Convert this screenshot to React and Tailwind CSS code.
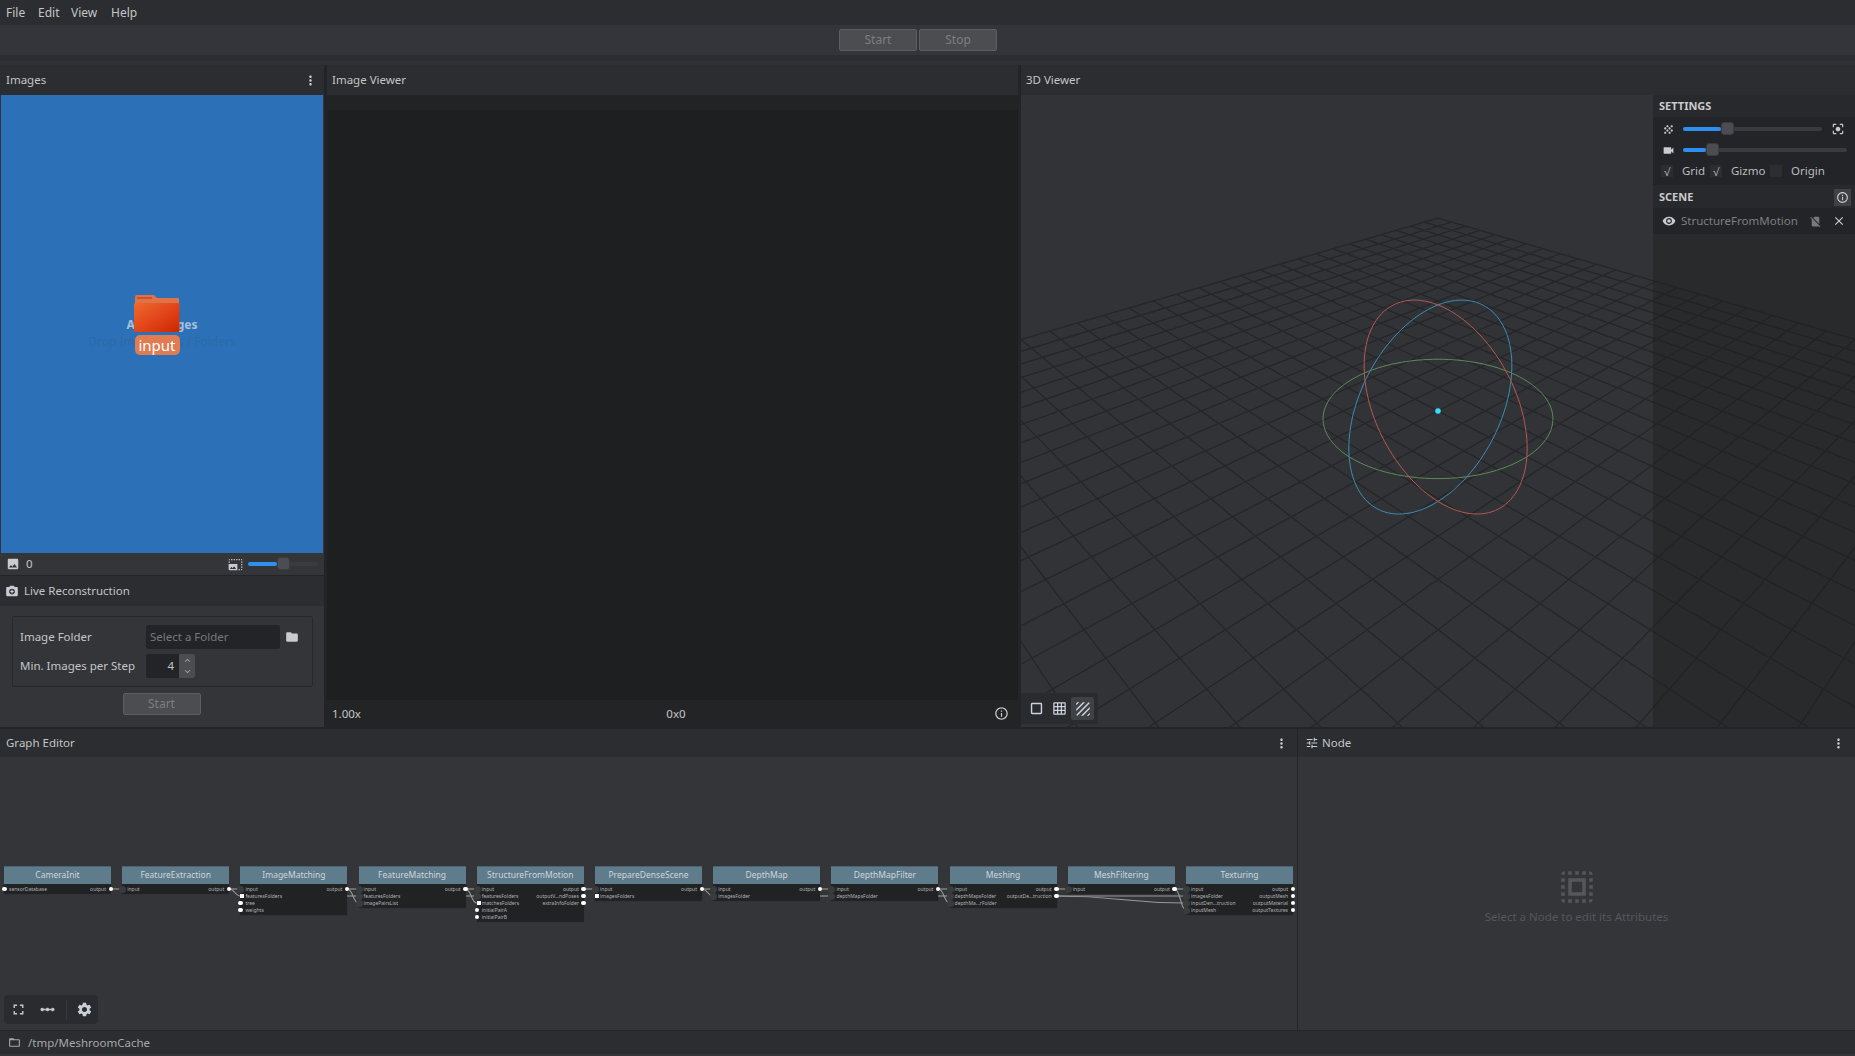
import React from 'react';
import {
  MdMoreVert, MdPhoto, MdPhotoSizeSelectLarge, MdCameraEnhance, MdFolder, MdKeyboardArrowUp, MdKeyboardArrowDown,
  MdInfoOutline, MdGrain, MdCenterFocusStrong, MdVideocam, MdVisibility, MdNoSim, MdClose, MdCropSquare, MdGridOn,
  MdTexture, MdTune, MdSelectAll, MdFullscreen, MdLinearScale, MdSettings, MdFolderOpen,
} from 'react-icons/md';

const NODE_W = 107;
const NODE_STEP = 118.2;
const ROW_H = 7;

// d: connected (dark), o: free dot, s: free square
const nodes = [
  { name: 'CameraInit', inputs: [['sensorDatabase', 'o']], outputs: ['output'] },
  { name: 'FeatureExtraction', inputs: [['input', 'd']], outputs: ['output'] },
  { name: 'ImageMatching', inputs: [['input', 'd'], ['featuresFolders', 's'], ['tree', 'o'], ['weights', 'o']], outputs: ['output'] },
  { name: 'FeatureMatching', inputs: [['input', 'd'], ['featuresFolders', 'd'], ['imagePairsList', 'd']], outputs: ['output'] },
  { name: 'StructureFromMotion', inputs: [['input', 'd'], ['featuresFolders', 'd'], ['matchesFolders', 's'], ['initialPairA', 'o'], ['initialPairB', 'o']], outputs: ['output', 'outputV...ndPoses', 'extraInfoFolder'] },
  { name: 'PrepareDenseScene', inputs: [['input', 'd'], ['imagesFolders', 's']], outputs: ['output'] },
  { name: 'DepthMap', inputs: [['input', 'd'], ['imagesFolder', 'd']], outputs: ['output'] },
  { name: 'DepthMapFilter', inputs: [['input', 'd'], ['depthMapsFolder', 'd']], outputs: ['output'] },
  { name: 'Meshing', inputs: [['input', 'd'], ['depthMapsFolder', 'd'], ['depthMa...rFolder', 'd']], outputs: ['output', 'outputDe...truction'] },
  { name: 'MeshFiltering', inputs: [['input', 'd']], outputs: ['output'] },
  { name: 'Texturing', inputs: [['input', 'd'], ['imagesFolder', 'd'], ['inputDen...truction', 'd'], ['inputMesh', 'd']], outputs: ['output', 'outputMesh', 'outputMaterial', 'outputTextures'] },
];

// [from node, from row, to node, to row]
const edges = [
  [0, 0, 1, 0], [1, 0, 2, 0], [1, 0, 2, 1], [2, 0, 3, 0], [2, 0, 3, 2], [3, 0, 4, 0], [3, 0, 4, 2],
  [4, 0, 5, 0], [5, 0, 6, 0], [5, 0, 6, 1], [6, 0, 7, 0], [7, 0, 8, 0], [7, 0, 8, 2], [8, 0, 9, 0],
  [9, 0, 10, 0], [9, 0, 10, 3], [8, 1, 10, 1], [8, 1, 10, 2],
];
// short ends of edges running behind a node
const stubs = [[3, 1], [4, 1], [7, 1], [8, 1]];

const nodeX = (i) => 4 + NODE_STEP * i;
const rowY = (r) => 23 + r * ROW_H;

function Graph() {
  return (
    <div className="relative flex-1 min-w-0 overflow-hidden">
      <svg className="absolute left-0 top-[109px]" width="1297" height="60" fill="none" stroke="#98999b" strokeWidth="1.1">
        {edges.map(([a, ra, b, rb]) => {
          const x1 = nodeX(a) + NODE_W;
          const x2 = nodeX(b);
          const y1 = rowY(ra);
          const y2 = rowY(rb);
          const mid = x1 + (x2 - x1) / 2;
          return <path key={`${a}${ra}${b}${rb}`} d={`M${x1} ${y1}C${mid} ${y1} ${mid} ${y2} ${x2} ${y2}`} />;
        })}
        {stubs.map(([n, r]) => (
          <path key={`${n}${r}`} d={`M${nodeX(n) - 12} ${rowY(r)}H${nodeX(n)}`} />
        ))}
      </svg>
      {nodes.map((n, i) => (
        <div key={n.name} className="absolute top-[109px] w-[107px]" style={{ left: nodeX(i) }}>
          <div className="h-[18px] bg-[#5f7c8c] border-t border-[#4d6572] text-center text-[8.5px] leading-[15px] text-[#ced6da]">{n.name}</div>
          <div className="relative bg-[#212224] shadow-[0_1px_1px_#00000055]" style={{ height: Math.max(n.inputs.length, n.outputs.length) * ROW_H + 2 }}>
            {n.inputs.map(([label, kind], r) => (
              <div key={label} className="absolute left-0 flex h-[7px] items-center" style={{ top: 1.5 + r * ROW_H }}>
                {kind === 'd' && <span className="absolute left-[-3px] size-[7px] rounded-full bg-[#3a3b3d]" />}
                {kind === 'o' && <span className="absolute left-[-2px] size-[4.5px] rounded-full bg-white" />}
                {kind === 's' && <span className="absolute left-0 size-[4px] bg-white" />}
                <span className="pl-[5px] text-[5px] leading-none whitespace-nowrap text-[#b0b2b4]">{label}</span>
              </div>
            ))}
            {n.outputs.map((label, r) => (
              <div key={label} className="absolute right-0 flex h-[7px] items-center" style={{ top: 1.5 + r * ROW_H }}>
                <span className="pr-[5px] text-[5px] leading-none whitespace-nowrap text-[#b0b2b4]">{label}</span>
                <span className="absolute right-[-2px] size-[4.5px] rounded-full bg-white" />
              </div>
            ))}
          </div>
        </div>
      ))}
      <div className="absolute left-[4px] bottom-[6px] flex h-[29px] w-[94px] items-center rounded-sm bg-[#2a2b2e] text-[#c2c6ca]">
        <MdFullscreen size={17} className="ml-[5.5px]" />
        <MdLinearScale size={17} className="ml-[12px]" />
        <div className="ml-[10px] h-[20px] w-px bg-[#38393c]" />
        <MdSettings size={17} className="ml-[9px] text-[#c9d0d8]" />
      </div>
    </div>
  );
}

// orbit camera looking at the grid origin, yawed 45deg
const PITCH = (31 * Math.PI) / 180;
const K = 33.5;
const CAM = 22;
const VW = 834;
const VH = 632;

function project(x, y, z) {
  const side = (x - z) * Math.SQRT1_2;
  const fwd = (x + z) * Math.SQRT1_2;
  const depth = CAM + fwd * Math.cos(PITCH) - y * Math.sin(PITCH);
  const up = fwd * Math.sin(PITCH) + y * Math.cos(PITCH);
  const s = (K * CAM) / depth;
  return [VW / 2 + side * s, VH / 2 - up * s];
}

function gridLine(a, b) {
  const p = project(a[0], 0, a[1]);
  const q = project(b[0], 0, b[1]);
  return `M${p[0].toFixed(1)} ${p[1].toFixed(1)}L${q[0].toFixed(1)} ${q[1].toFixed(1)}`;
}

function ring(fn) {
  const pts = [];
  for (let i = 0; i <= 120; i++) {
    const th = (i / 120) * Math.PI * 2;
    pts.push(fn(Math.cos(th), Math.sin(th)));
  }
  return pts.map((p, i) => `${i ? 'L' : 'M'}${p[0].toFixed(1)} ${p[1].toFixed(1)}`).join('') + 'Z';
}

function Scene() {
  const N = 14;
  const lines = [];
  for (let i = -N; i <= N; i++) {
    lines.push(gridLine([i, -N], [i, N]));
    lines.push(gridLine([-N, i], [N, i]));
  }
  const R = 3.4;
  return (
    <svg className="absolute inset-0" width={VW} height={VH} fill="none">
      <path d={lines.join('')} stroke="#252628" strokeWidth="1.3" />
      <path d={ring((c, s) => project(R * c, 0, R * s))} stroke="#5a8c58" strokeWidth="1" />
      <path d={ring((c, s) => project(R * c, R * s, 0))} stroke="#3b8db3" strokeWidth="1" />
      <path d={ring((c, s) => project(0, R * s, R * c))} stroke="#b8574f" strokeWidth="1" />
      <circle cx={VW / 2} cy={VH / 2} r="2.8" fill="#35e0ff" />
    </svg>
  );
}

function Slider({ track, fill, knob }) {
  return (
    <div className={`relative h-[4px] rounded-full bg-[#3a3b3e] ${track}`}>
      <div className={`absolute left-0 top-0 h-[4px] rounded-full bg-[#2e8ff0] ${fill}`} />
      <div className={`absolute top-[-5px] h-[13px] w-[13px] rounded-[3px] bg-[#4b4d52] border border-[#3a3b3e] ${knob}`} />
    </div>
  );
}

function Check({ on, label, className }) {
  return (
    <div className={`flex items-center ${className}`}>
      <span className="flex h-[12px] w-[12px] items-center justify-center bg-[#2c2d30] text-[11px] leading-none text-[#b0b2b5]">{on ? '√' : ''}</span>
      <span className="ml-[9px]">{label}</span>
    </div>
  );
}

function PanelHeader({ title, icon, menu, className = 'px-[5px]' }) {
  return (
    <div className={`flex h-[30px] shrink-0 items-center bg-[#2b2d30] text-[11.5px] text-[#c3c5c7] ${className}`}>
      {icon}
      <span className="flex-1">{title}</span>
      {menu && <MdMoreVert size={15} className="mr-[2px] text-[#c8ccd0]" />}
    </div>
  );
}

function GreyButton({ label, className }) {
  return (
    <div className={`flex items-center justify-center rounded-[2px] border border-[#5c5e61] bg-[#4b4d50] text-[12px] text-[#7c7e80] ${className}`}>{label}</div>
  );
}

function FolderIcon() {
  return (
    <svg width="46" height="38" viewBox="0 0 46 38">
      <defs>
        <linearGradient id="folderFront" x1="0" y1="0" x2="1" y2="1">
          <stop offset="0" stopColor="#ee6a2e" />
          <stop offset="0.5" stopColor="#e2461a" />
          <stop offset="1" stopColor="#cc2600" />
        </linearGradient>
      </defs>
      <path d="M1 2a2 2 0 0 1 2-2h17l3 3h21a1 1 0 0 1 1 1v12H1z" fill="#e07345" />
      <rect x="3" y="2" width="15" height="2" fill="#d4502a" />
      <rect x="0" y="8" width="45.5" height="29" rx="1.5" fill="url(#folderFront)" />
    </svg>
  );
}

export default function App() {
  return (
    <div className="flex h-[1056px] w-[1855px] flex-col overflow-hidden bg-[#333539] text-[11.5px] text-[#c3c5c7]" style={{ fontFamily: '"Noto Sans", "Open Sans", sans-serif' }}>
      {/* Menu */}
      <div className="flex h-[25px] shrink-0 items-center bg-[#2b2d30] pl-[6px] text-[12px] text-[#c3c5c7]">
        <span className="w-[32px]">File</span>
        <span className="w-[33px]">Edit</span>
        <span className="w-[40px]">View</span>
        <span>Help</span>
      </div>

      {/* Toolbar */}
      <div className="flex h-[30px] shrink-0 items-center justify-center gap-[2px] bg-[#33353a] pr-[19px]">
        <GreyButton label="Start" className="h-[22px] w-[78px]" />
        <GreyButton label="Stop" className="h-[22px] w-[78px]" />
      </div>
      <div className="h-[6px] shrink-0 bg-[#2b2d30]" />
      <div className="h-[4px] shrink-0 bg-[#2f3134]" />

      {/* Top row */}
      <div className="flex h-[662px] shrink-0">
        <div className="flex w-[324px] shrink-0 flex-col">
          <PanelHeader title="Images" menu className="pl-[6px] pr-[4px]" />
          <div className="relative h-[458px] shrink-0 mx-[1px] bg-[#2c71b7]">
            <div className="flex h-full flex-col items-center justify-center pt-[18px]">
              <div className="text-[12px] font-bold leading-[17px] text-[#a9c0d6]">Add Images</div>
              <div className="text-[12px] leading-[17px] text-[#2b6aa9]">Drop Image Files / Folders</div>
            </div>
            <div className="absolute left-[133px] top-[200px] flex w-[46px] flex-col items-center">
              <FolderIcon />
              <div className="mt-[2px] flex h-[20px] w-[45px] items-center justify-center rounded-[5px] bg-[#e07b52] text-[15px] text-white">input</div>
            </div>
          </div>
          <div className="flex h-[23px] shrink-0 items-center border-b border-[#232427] px-[6px]">
            <MdPhoto size={14} className="text-[#c8ccd0]" />
            <span className="ml-[6px]">0</span>
            <MdPhotoSizeSelectLarge size={15} className="ml-auto mr-[5px] text-[#c8ccd0]" />
            <Slider track="w-[70px]" fill="w-[29px]" knob="left-[29px]" />
          </div>
          <PanelHeader title="Live Reconstruction" icon={<MdCameraEnhance size={14} className="mr-[5px] text-[#c8ccd0]" />} />
          <div className="flex flex-1 flex-col pl-[12px] pr-[11px] pt-[10px]">
            <div className="h-[71px] rounded-[2px] border border-[#27282b] pl-[7px] pt-[8px]">
              <div className="flex h-[24px] items-center">
                <span className="w-[126px]">Image Folder</span>
                <div className="flex h-[24px] w-[134px] items-center rounded-[2px] bg-[#232427] pl-[4px] text-[#76787b]">Select a Folder</div>
                <MdFolder size={14} className="ml-[5px] text-[#c8ccd0]" />
              </div>
              <div className="mt-[5px] flex h-[24px] items-center">
                <span className="w-[126px] whitespace-nowrap">Min. Images per Step</span>
                <div className="flex h-[24px] w-[49px] items-center justify-between rounded-[2px] bg-[#232427]">
                  <span className="w-[28px] text-right text-[#c3c5c7]">4</span>
                  <div className="flex h-full w-[16px] flex-col items-center justify-center rounded-r-[2px] bg-[#4b4d50] text-[#a4a6a8]">
                    <MdKeyboardArrowUp size={11} />
                    <MdKeyboardArrowDown size={11} />
                  </div>
                </div>
              </div>
            </div>
            <div className="flex justify-center pr-[2px]">
              <GreyButton label="Start" className="mt-[6px] h-[22px] w-[78px]" />
            </div>
          </div>
        </div>
        <div className="w-[3px] shrink-0 bg-[#232427]" />

        <div className="flex w-[691px] shrink-0 flex-col">
          <PanelHeader title="Image Viewer" />
          <div className="flex flex-1 flex-col bg-[#1e1f21]">
            <div className="h-[15px] bg-[#222325]" />
            <div className="flex-1" />
            <div className="flex h-[27px] items-center justify-between bg-[#232426] pl-[5px] pr-[9px]">
              <span>1.00x</span>
              <span className="mr-[3px]">0x0</span>
              <MdInfoOutline size={15} className="text-[#c8ccd0]" />
            </div>
          </div>
        </div>
        <div className="w-[3px] shrink-0 bg-[#232427]" />

        <div className="flex w-[834px] shrink-0 flex-col">
          <PanelHeader title="3D Viewer" />
          <div className="relative flex-1 overflow-hidden bg-[#323337]">
            <Scene />
            <div className="absolute right-0 top-0 flex h-full w-[202px] flex-col bg-[#1d1e20]/45 text-[#b9bbbd]">
              <div className="flex h-[22px] items-center bg-[#28292c] pl-[6px] text-[11px] font-bold text-[#c9cbcd]">SETTINGS</div>
              <div className="bg-[#232427] pb-[2px]">
                <div className="flex h-[24px] items-center">
                  <MdGrain size={13} className="ml-[9px] text-[#c8ccd0]" />
                  <Slider track="ml-[8px] w-[139px]" fill="w-[38px]" knob="left-[38px]" />
                  <MdCenterFocusStrong size={14} className="ml-[9px] text-[#c8ccd0]" />
                </div>
                <div className="flex h-[18px] items-center">
                  <MdVideocam size={13} className="ml-[9px] text-[#c8ccd0]" />
                  <Slider track="ml-[8px] w-[164px]" fill="w-[23px]" knob="left-[23px]" />
                </div>
                <div className="flex h-[24px] items-center pl-[8px]">
                  <Check on label="Grid" className="w-[49px]" />
                  <Check on label="Gizmo" className="w-[60px]" />
                  <Check label="Origin" />
                </div>
              </div>
              <div className="flex h-[23px] items-center justify-between bg-[#28292c] pl-[6px] pt-[1px] text-[11px] font-bold text-[#c9cbcd]">
                SCENE
                <span className="mr-[4px] flex size-[17px] items-center justify-center bg-[#3f4144] text-[#c8ccd0]"><MdInfoOutline size={13} /></span>
              </div>
              <div className="flex h-[26px] items-center bg-[#232427] pl-[9px] pr-[9px]">
                <MdVisibility size={14} className="text-[#c8ccd0]" />
                <span className="ml-[5px] flex-1 text-[11.5px] text-[#7d7f82]">StructureFromMotion</span>
                <MdNoSim size={13} className="mr-[10px] text-[#77797c]" />
                <MdClose size={14} className="text-[#c8ccd0]" />
              </div>
            </div>
            <div className="absolute bottom-[3px] left-0 flex h-[31px] w-[77px] items-center bg-[#2a2b2e] pl-[7px] text-[#c9d4e0]">
              <MdCropSquare size={17} />
              <MdGridOn size={15} className="ml-[7px]" />
              <span className="ml-[4px] flex size-[23px] items-center justify-center rounded-[2px] bg-[#3f4144]"><MdTexture size={18} /></span>
            </div>
          </div>
        </div>
      </div>

      <div className="h-[2px] shrink-0 bg-[#232427]" />

      {/* Bottom row */}
      <div className="flex h-[301px] shrink-0">
        <div className="flex w-[1297px] shrink-0 flex-col">
          <div className="flex h-[28px] shrink-0 items-center bg-[#2b2d30] px-[6px]">
            <span className="flex-1">Graph Editor</span>
            <MdMoreVert size={15} className="mr-[2px] text-[#c8ccd0]" />
          </div>
          <Graph />
        </div>
        <div className="w-px shrink-0 bg-[#232427]" />
        <div className="flex flex-1 flex-col">
          <div className="flex h-[28px] shrink-0 items-center bg-[#2b2d30] pl-[7px] pr-[9px]">
            <MdTune size={14} className="mr-[3px] text-[#c8ccd0]" />
            <span className="flex-1">Node</span>
            <MdMoreVert size={15} className="text-[#c8ccd0]" />
          </div>
          <div className="flex flex-1 flex-col items-center pt-[109px]">
            <MdSelectAll size={42} className="text-[#55575b]" />
            <span className="text-[#55575b]">Select a Node to edit its Attributes</span>
          </div>
        </div>
      </div>

      {/* Status bar */}
      <div className="flex h-[24px] shrink-0 items-center border-t border-[#232427] bg-[#2b2d30] pl-[8px] text-[#a6a8aa]">
        <MdFolderOpen size={13} className="mr-[7px]" />
        /tmp/MeshroomCache
      </div>
    </div>
  );
}
